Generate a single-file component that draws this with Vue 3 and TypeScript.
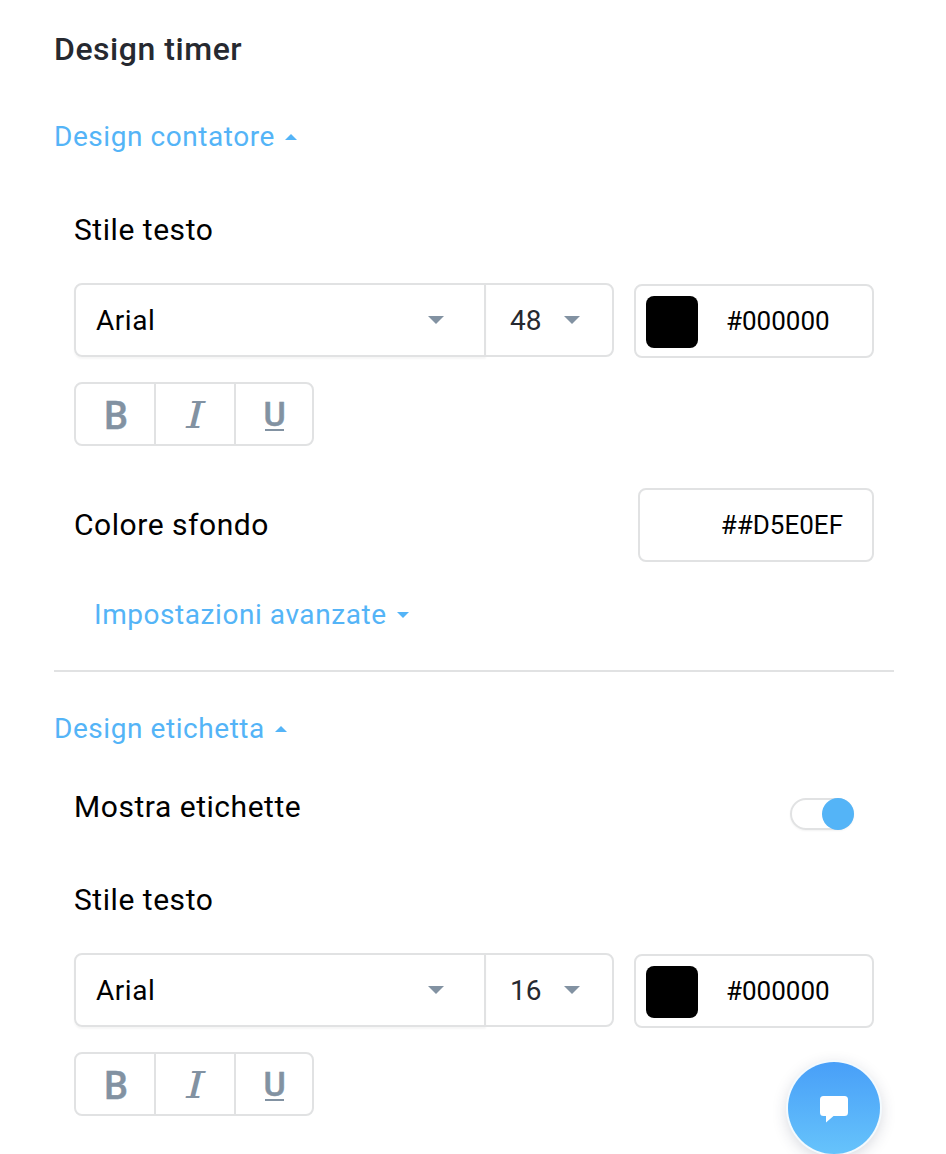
<script setup lang="ts">
import { ref } from 'vue'

interface TextStyle {
  family: string
  size: number
  color: string
}

const counter = ref<TextStyle>({ family: 'Arial', size: 48, color: '#000000' })
const label = ref<TextStyle>({ family: 'Arial', size: 16, color: '#000000' })
const background = ref('##D5E0EF')
const showLabels = ref(true)
const formats = [
  { key: 'bold', glyph: 'B' },
  { key: 'italic', glyph: 'I' },
  { key: 'underline', glyph: 'U' },
]
</script>

<template>
  <main class="panel">
    <h1 class="title">Design timer</h1>

    <section class="section">
      <a class="link">Design contatore<i class="tri up"></i></a>
      <div class="body">
        <h2 class="label style-label">Stile testo</h2>
        <div class="row">
          <div class="select family">{{ counter.family }}<i class="caret"></i></div>
          <div class="select size">{{ counter.size }}<i class="caret"></i></div>
          <div class="color">
            <span class="swatch" :style="{ background: counter.color }"></span>
            <span class="hex">{{ counter.color }}</span>
          </div>
        </div>
        <div class="toolbar">
          <button v-for="f in formats" :key="f.key" type="button" class="tool">
            <span :class="f.key">{{ f.glyph }}</span>
          </button>
        </div>
        <div class="background-row">
          <h2 class="label">Colore sfondo</h2>
          <div class="color background">
            <span class="hex">{{ background }}</span>
          </div>
        </div>
        <a class="link advanced">Impostazioni avanzate<i class="tri down"></i></a>
      </div>
    </section>

    <hr class="divider" />

    <section class="section">
      <a class="link">Design etichetta<i class="tri up"></i></a>
      <div class="body">
        <div class="toggle-row">
          <h2 class="label">Mostra etichette</h2>
          <span class="toggle" role="switch" :aria-checked="showLabels"><span class="knob"></span></span>
        </div>
        <h2 class="label style-label">Stile testo</h2>
        <div class="row">
          <div class="select family">{{ label.family }}<i class="caret"></i></div>
          <div class="select size">{{ label.size }}<i class="caret"></i></div>
          <div class="color">
            <span class="swatch" :style="{ background: label.color }"></span>
            <span class="hex">{{ label.color }}</span>
          </div>
        </div>
        <div class="toolbar">
          <button v-for="f in formats" :key="f.key" type="button" class="tool">
            <span :class="f.key">{{ f.glyph }}</span>
          </button>
        </div>
      </div>
    </section>

    <button type="button" class="chat" aria-label="Chat">
      <svg width="28" height="27" viewBox="0 0 28 27">
        <path d="M3.5 0h21A3.5 3.5 0 0 1 28 3.500v13a3.500 3.500 0 0 1-3.500 3.500H13.500L6 26.500V20H3.500A3.500 3.500 0 0 1 0 16.500v-13A3.500 3.500 0 0 1 3.500 0z" fill="#fff" />
      </svg>
    </button>
  </main>
</template>

<style>
body {
  margin: 0;
  background: #fff;
  overflow: hidden;
}
</style>

<style scoped>
.panel {
  box-sizing: border-box;
  width: 946px;
  height: 1154px;
  padding: 29px 52px 0 54px;
  overflow: hidden;
  position: relative;
  background: #fff;
  font-family: Roboto, "Liberation Sans", sans-serif;
  color: #000;
}
.title {
  margin: 0 0 48px;
  font-size: 32px;
  line-height: 40px;
  font-weight: 500;
  letter-spacing: 0.54px;
  color: #262930;
}
.link {
  display: flex;
  align-items: center;
  height: 40px;
  font-size: 28px;
  line-height: 40px;
  letter-spacing: 0.56px;
  color: #54b4f7;
}
.tri {
  margin-left: 10px;
  border: 6px solid transparent;
}
.tri.up {
  border-top: 0;
  border-bottom-color: #54b4f7;
  margin-top: -1px;
}
.tri.down {
  border-bottom: 0;
  border-top-color: #54b4f7;
}
.body {
  padding: 0 20px;
}
.label {
  margin: 0;
  font-size: 30px;
  line-height: 40px;
  font-weight: 400;
  letter-spacing: 0.54px;
}
.style-label {
  margin-top: 53px;
}
.row {
  display: flex;
  margin-top: 33px;
}
.select {
  box-sizing: border-box;
  height: 74px;
  display: flex;
  align-items: center;
  justify-content: space-between;
  border: 2px solid #e1e2e3;
  font-size: 28px;
  letter-spacing: 0.56px;
}
.family {
  width: 412px;
  padding: 0 40px 0 20px;
  border-radius: 8px 0 0 8px;
  box-shadow: 0 2px 2px rgba(0, 0, 0, 0.04);
}
.size {
  width: 130px;
  margin-left: -2px;
  padding: 0 32px 0 24px;
  border-radius: 0 8px 8px 0;
  color: #262930;
  letter-spacing: 0;
}
.caret {
  border: 8px solid transparent;
  border-top-color: #8292a2;
  border-bottom: 0;
}
.color {
  box-sizing: border-box;
  width: 240px;
  height: 74px;
  margin: 1px 0 -1px 20px;
  padding-left: 10px;
  display: flex;
  align-items: center;
  border: 2px solid #e1e2e3;
  border-radius: 8px;
}
.swatch {
  width: 52px;
  height: 52px;
  margin-top: 2px;
  border-radius: 8px;
}
.hex {
  margin-left: 28px;
  font-size: 26px;
}
.toolbar {
  display: flex;
  box-sizing: border-box;
  width: 240px;
  height: 64px;
  margin-top: 25px;
  border: 2px solid #e1e2e3;
  border-radius: 8px;
}
.tool {
  box-sizing: border-box;
  width: 80px;
  display: flex;
  align-items: center;
  justify-content: center;
  padding: 0;
  border: 0;
  border-left: 2px solid #e1e2e3;
  background: none;
  color: #8292a2;
  font-family: Roboto, sans-serif;
}
.tool:first-child {
  width: 78px;
  border-left: 0;
}
.tool:last-child {
  width: 78px;
}
.bold {
  margin-top: 3px;
  font-size: 38px;
  line-height: 40px;
  font-weight: 500;
  padding-left: 2px;
  -webkit-text-stroke: 0.4px #8292a2;
}
.italic {
  margin-top: 2px;
  padding-left: 2px;
  font-family: "DejaVu Serif", serif;
  font-style: italic;
  font-size: 38px;
  line-height: 40px;
  transform: scaleX(1.25);
}
.underline {
  height: 30px;
  width: 19px;
  box-sizing: border-box;
  display: flex;
  justify-content: center;
  margin: 3px 0 0 1px;
  border-bottom: 2px solid #8292a2;
  font-size: 34px;
  line-height: 26px;
  font-weight: 500;
  -webkit-text-stroke: 0.5px #8292a2;
}
.background-row {
  display: flex;
  justify-content: space-between;
  align-items: center;
  margin-top: 42px;
  width: 800px;
}
.background {
  width: 236px;
  margin: 0;
  padding: 0 29px 0 0;
  justify-content: flex-end;
}
.advanced {
  margin: 33px 0 0 20px;
}
.divider {
  width: 840px;
  height: 2px;
  margin: 35px 0 37px;
  border: 0;
  background: #e1e2e3;
}
.toggle-row {
  display: flex;
  justify-content: space-between;
  width: 780px;
  margin-top: 38px;
}
.toggle-row + .style-label {
  margin-top: 50px;
}
.toggle {
  box-sizing: border-box;
  display: flex;
  justify-content: flex-end;
  width: 64px;
  height: 32px;
  margin-top: 11px;
  border: 2px solid #e1e2e3;
  border-radius: 16px;
  box-shadow: 0 1px 2px rgba(0, 0, 0, 0.05);
}
.knob {
  flex: none;
  width: 32px;
  height: 32px;
  margin: -2px -2px 0 0;
  border-radius: 50%;
  background: #54b4f7;
}
.chat {
  position: absolute;
  left: 788px;
  top: 1062px;
  width: 92px;
  height: 92px;
  padding: 2px 0 0;
  border: 0;
  border-radius: 50%;
  display: flex;
  align-items: center;
  justify-content: center;
  background: linear-gradient(#489ff8, #66c3fb);
  box-shadow: 0 0 0 2px #f3fafe, 0 4px 16px rgba(40, 50, 80, 0.22);
}
</style>
